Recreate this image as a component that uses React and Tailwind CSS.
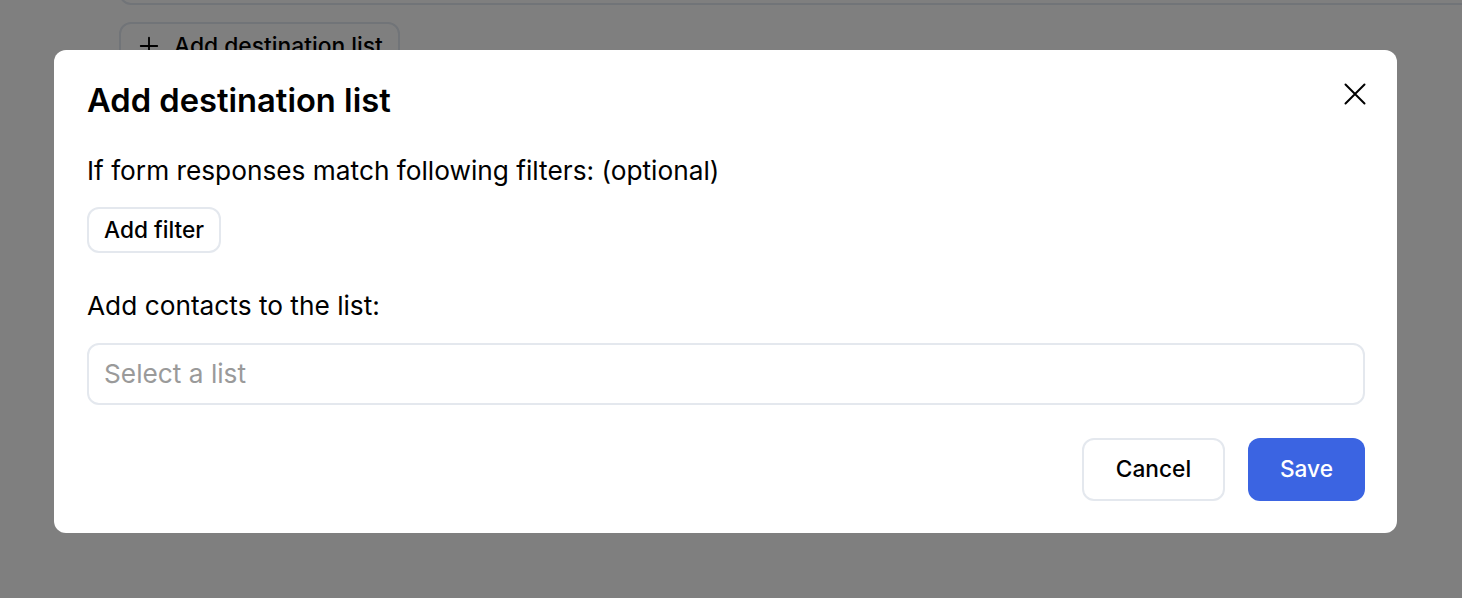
import React from "react";

export default function App() {
  return (
    <div className="relative w-[1462px] h-[598px] overflow-hidden bg-white" style={{ fontFamily: "Inter, 'Noto Sans', sans-serif" }}>
      {/* background page */}
      <div className="pl-[119px]">
        <div className="-mt-[40px] h-[45px] rounded-b-xl border-2 border-[#e2e8f0] mr-[-20px]"></div>
        <button className="mt-[17px] flex items-center gap-[14px] h-[48px] pl-[17px] pr-[15px] border-2 border-[#e2e8f0] rounded-xl text-[22.8px] font-medium text-black">
          <svg width="22" height="22" viewBox="0 0 24 24" fill="none" stroke="currentColor" strokeWidth="2" strokeLinecap="round">
            <path d="M12 3v18M3 12h18" />
          </svg>
          <span>Add destination list</span>
        </button>
      </div>

      {/* overlay */}
      <div className="absolute inset-0 bg-black/50">
        <div className="ml-[54px] mt-[50px] w-[1343px] bg-white rounded-xl pl-[33px] pr-[32px] pt-[32px] pb-[32px]">
          <div className="flex items-center justify-between h-[36px]">
            <h2 className="text-[32.7px] leading-[36px] font-semibold text-black">Add destination list</h2>
            <button className="-mr-[2px] -mt-[12px] text-black">
              <svg width="24" height="24" viewBox="0 0 24 24" fill="none" stroke="currentColor" strokeWidth="2" strokeLinecap="round">
                <path d="M2.5 2.5l19 19M21.5 2.5l-19 19" />
              </svg>
            </button>
          </div>

          <p className="mt-[35px] text-[26.25px] leading-[36px] text-black">If form responses match following filters: (optional)</p>
          <button className="mt-[18px] h-[46px] px-[15px] border-2 border-[#e4e8ee] rounded-xl text-[22.7px] font-medium text-black">Add filter</button>

          <p className="mt-[35px] text-[26.25px] leading-[36px] text-black">Add contacts to the list:</p>
          <div className="mt-[19px] h-[62px] border-2 border-[#e4e8ee] rounded-xl flex items-center px-[15px] text-[26.25px] text-[#9a9a9a]">Select a list</div>

          <div className="mt-[33px] flex justify-end gap-[23px]">
            <button className="h-[63px] w-[143px] border-2 border-[#e4e8ee] rounded-xl text-[22.7px] font-medium text-black">Cancel</button>
            <button className="h-[63px] w-[117px] bg-[#3b64e2] rounded-xl text-[22.7px] font-medium text-white">Save</button>
          </div>
        </div>
      </div>
    </div>
  );
}
